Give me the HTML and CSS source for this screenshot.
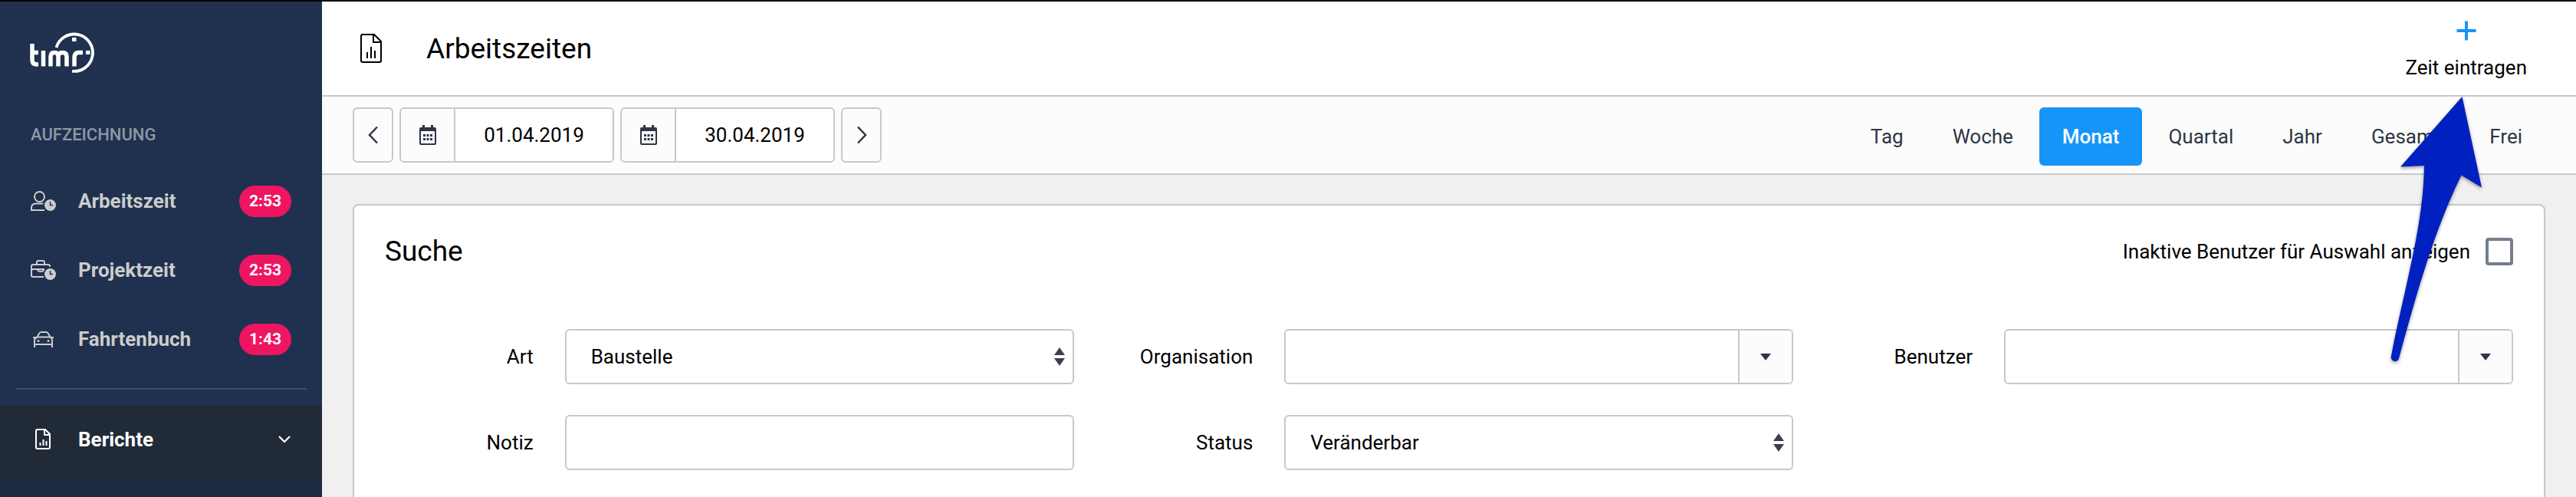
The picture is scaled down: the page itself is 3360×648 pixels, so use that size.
FILE: index.html
```html
<!DOCTYPE html>
<html lang="de">

<head>
    <meta charset="UTF-8">
    <meta name="viewport" content="width=device-width, initial-scale=1.0">
    <title>timr - Arbeitszeiten</title>
    <link rel="stylesheet" href="styles.css">
</head>

<body>
    <div class="app">
        <aside class="sidebar">
            <a class="logo" href="#" aria-label="timr">
                <svg width="86" height="54" viewBox="0 0 86 54" fill="none" stroke="#fff">
                    <path d="M35.500 20A24.200 24.200 0 1 1 56 50.800" stroke-width="3.800" />
                    <path d="M4 15v21q0 6 6 6h2M4 26.500h8M18.500 24v20.500M28 44.500V32q0-5.500 5-5.500t5 5.500v12.500M38 32q0-5.500 5.500-5.500t5.500 5.500v12.500M59 44.500V33q0-6.500 6-6.500h5" stroke-width="5.500" />
                    <path d="M56 7h5.500v5H56zM74 24h5.500v5H74z" fill="#fff" stroke="none" />
                </svg>
            </a>
            <h2 class="nav-title">Aufzeichnung</h2>
            <nav class="nav">
                <a class="nav-item" href="#">
                    <svg class="nav-icon" viewBox="0 0 34 28" fill="none" stroke="currentColor" stroke-width="2">
                        <circle cx="11.500" cy="8.500" r="6.500" />
                        <path d="M18 26H1v-3q0-5.500 5.500-5.500h10" />
                        <circle cx="25.500" cy="19.500" r="7.500" fill="currentColor" stroke="none" />
                        <path d="M25.500 15v4.500h3.500" stroke="#1f314f" stroke-width="1.500" />
                    </svg>
                    <span class="nav-label">Arbeitszeit</span>
                    <span class="badge">2:53</span>
                </a>
                <a class="nav-item" href="#">
                    <svg class="nav-icon" viewBox="0 0 34 28" fill="none" stroke="currentColor" stroke-width="2">
                        <path d="M17 23H3q-2 0-2-2V9q0-2 2-2h20q2 0 2 2v1M8 7V4q0-2 2-2h6q2 0 2 2v3M1 13h17M9 13q0 3 4 3t4-3" />
                        <circle cx="25.500" cy="19.500" r="7.500" fill="currentColor" stroke="none" />
                        <path d="M25.500 15v4.500h3.500" stroke="#1f314f" stroke-width="1.500" />
                    </svg>
                    <span class="nav-label">Projektzeit</span>
                    <span class="badge">2:53</span>
                </a>
                <a class="nav-item" href="#">
                    <svg class="nav-icon" viewBox="0 0 34 28" fill="none" stroke="currentColor" stroke-width="2">
                        <path d="M5 25v-9q0-3 3-4l3-5q1-2 3-2h6q2 0 3 2l3 5q2 1 2 4v9M5 21h23M8 11.500h17M3 12h4M26 12h4" />
                        <circle cx="10" cy="16.500" r="1.500" fill="currentColor" stroke="none" />
                        <circle cx="23" cy="16.500" r="1.500" fill="currentColor" stroke="none" />
                    </svg>
                    <span class="nav-label">Fahrtenbuch</span>
                    <span class="badge">1:43</span>
                </a>
            </nav>
            <hr class="nav-divider">
            <a class="nav-item nav-item-active" href="#">
                <svg class="nav-icon" viewBox="0 0 34 28" fill="none" stroke="currentColor" stroke-width="2">
                    <path d="M9 1h10l6 6v17q0 2-2 2H9q-2 0-2-2V3q0-2 2-2zM18 1v7h7M12.500 22v-4M16.500 22v-8M20.500 22v-6" />
                </svg>
                <span class="nav-label">Berichte</span>
                <svg class="nav-chevron" width="16" height="10" viewBox="0 0 16 10" fill="none" stroke="#fff" stroke-width="2.200">
                    <path d="M1 1l7 7 7-7" />
                </svg>
            </a>
            <div class="nav-sub"></div>
        </aside>

        <main class="main">
            <header class="header">
                <svg class="header-icon" width="30" height="40" viewBox="0 0 30 40" fill="none" stroke="#000" stroke-width="2">
                    <path d="M4 2h15l9 9v25q0 2-2 2H4q-2 0-2-2V4q0-2 2-2zM18 2v10h10M10 33v-8M15 33V18M20 33V23" />
                </svg>
                <h1 class="header-title">Arbeitszeiten</h1>
                <a class="header-action" href="#">
                    <svg width="26" height="26" viewBox="0 0 26 26" stroke="#1595f9" stroke-width="4">
                        <path d="M13 .5v25M.5 13h25" />
                    </svg>
                    <span>Zeit eintragen</span>
                </a>
            </header>

            <div class="toolbar">
                <button class="step" aria-label="Zurück">
                    <svg width="14" height="24" viewBox="0 0 14 24" fill="none" stroke="#2d3644" stroke-width="2.500">
                        <path d="M12 1.500L2 12l10 10.500" />
                    </svg>
                </button>
                <div class="date">
                    <span class="date-icon">
                        <svg width="24" height="28" viewBox="0 0 24 28" fill="#2d3644">
                            <path fill-rule="evenodd" d="M5 1h3v3h8V1h3v3h2q2 0 2 2v19q0 2-2 2H3q-2 0-2-2V6q0-2 2-2h2zM3 9v16h18V9z" />
                            <path d="M6 13h3v3H6zM10.500 13h3v3h-3zM15 13h3v3h-3zM6 18h3v3H6zM10.500 18h3v3h-3zM15 18h3v3h-3z" />
                        </svg>
                    </span>
                    <span class="date-value">01.04.2019</span>
                </div>
                <div class="date">
                    <span class="date-icon">
                        <svg width="24" height="28" viewBox="0 0 24 28" fill="#2d3644">
                            <path fill-rule="evenodd" d="M5 1h3v3h8V1h3v3h2q2 0 2 2v19q0 2-2 2H3q-2 0-2-2V6q0-2 2-2h2zM3 9v16h18V9z" />
                            <path d="M6 13h3v3H6zM10.500 13h3v3h-3zM15 13h3v3h-3zM6 18h3v3H6zM10.500 18h3v3h-3zM15 18h3v3h-3z" />
                        </svg>
                    </span>
                    <span class="date-value">30.04.2019</span>
                </div>
                <button class="step" aria-label="Weiter">
                    <svg width="14" height="24" viewBox="0 0 14 24" fill="none" stroke="#2d3644" stroke-width="2.500">
                        <path d="M2 1.500L12 12 2 22.500" />
                    </svg>
                </button>
                <div class="tabs">
                    <a class="tab" href="#">Tag</a>
                    <a class="tab" href="#">Woche</a>
                    <a class="tab tab-active" href="#">Monat</a>
                    <a class="tab" href="#">Quartal</a>
                    <a class="tab" href="#">Jahr</a>
                    <a class="tab" href="#">Gesamt</a>
                    <a class="tab" href="#">Frei</a>
                </div>
            </div>

            <section class="card">
                <div class="card-header">
                    <h2 class="card-title">Suche</h2>
                    <label class="inactive">
                        Inaktive Benutzer für Auswahl anzeigen
                        <span class="checkbox"></span>
                    </label>
                </div>
                <div class="form">
                    <div class="field">
                        <span class="label">Art</span>
                        <div class="control">
                            <span class="value">Baustelle</span>
                            <svg class="updown" width="14" height="24" viewBox="0 0 14 24" fill="#3b414b">
                                <path d="M7 0l7 10H0zM7 24l7-10H0z" />
                            </svg>
                        </div>
                    </div>
                    <div class="field">
                        <span class="label">Organisation</span>
                        <div class="control">
                            <span class="value"></span>
                            <span class="caret"></span>
                        </div>
                    </div>
                    <div class="field">
                        <span class="label">Benutzer</span>
                        <div class="control">
                            <span class="value"></span>
                            <span class="caret"></span>
                        </div>
                    </div>
                    <div class="field">
                        <span class="label">Notiz</span>
                        <div class="control"></div>
                    </div>
                    <div class="field">
                        <span class="label">Status</span>
                        <div class="control">
                            <span class="value">Veränderbar</span>
                            <svg class="updown" width="14" height="24" viewBox="0 0 14 24" fill="#3b414b">
                                <path d="M7 0l7 10H0zM7 24l7-10H0z" />
                            </svg>
                        </div>
                    </div>
                </div>
            </section>
        </main>
    </div>

    <!-- Hint arrow pointing at "Zeit eintragen" -->
    <svg class="hint-arrow" width="120" height="356" viewBox="0 0 120 356" fill="#0021c0">
        <path d="M86.500 1L112 119.500 85.500 103.500C50 175 26 262 4 342.500a5 5 0 0 1 -10 -3.500C10 255 36 170 37 91L6 92.500z" />
    </svg>
</body>

</html>
```
FILE: styles.css
```css
* {
    margin: 0;
    padding: 0;
    box-sizing: border-box;
}

body {
    font-family: Roboto, sans-serif;
    font-size: 26px;
    color: #000;
    background: #f0f0f0;
    height: 648px;
    overflow: hidden;
}

a {
    color: inherit;
    text-decoration: none;
}

svg {
    display: block;
    flex: none;
}

.app {
    display: flex;
    height: 648px;
    border-top: 2px solid #000;
}

/* Sidebar */
.sidebar {
    width: 420px;
    flex: none;
    display: flex;
    flex-direction: column;
    background: #1f314f;
    color: #ccc;
}

.logo {
    height: 138px;
    padding: 40px 0 0 38px;
}

.nav-title {
    height: 77px;
    padding-left: 40px;
    font-size: 22px;
    line-height: 72px;
    font-weight: 500;
    text-transform: uppercase;
    color: #8f98a5;
}

.nav-item {
    height: 90px;
    display: flex;
    align-items: center;
    padding: 0 40px;
    font-weight: 700;
}

.nav-icon {
    width: 34px;
    height: 28px;
    margin-right: 28px;
}

.nav-label {
    flex: 1;
}

.badge {
    width: 68px;
    height: 41px;
    border-radius: 21px;
    background: #ee1561;
    color: #fff;
    font-size: 21px;
    line-height: 41px;
    text-align: center;
}

.nav-divider {
    height: 2px;
    margin: 19px 20px 20px;
    border: none;
    background: #3f4d63;
}

.nav-item-active {
    background: #212b38;
    color: #fff;
}

.nav-chevron {
    margin-right: 1px;
}

.nav-sub {
    flex: 1;
    background: linear-gradient(#212c3b, #1c2a42);
}

/* Header */
.main {
    flex: 1;
    display: flex;
    flex-direction: column;
}

.header {
    height: 124px;
    display: flex;
    align-items: center;
    padding: 0 64px 0 49px;
    background: #fff;
    border-bottom: 2px solid #c8c8c8;
}

.header-title {
    flex: 1;
    margin-left: 57px;
    font-size: 37px;
    font-weight: 400;
}

.header-action {
    display: flex;
    flex-direction: column;
    align-items: center;
    gap: 20px;
    padding-top: 4px;
}

/* Toolbar */
.toolbar {
    height: 102px;
    display: flex;
    gap: 8px;
    padding: 14px 40px 0;
    background: #fcfcfc;
    border-bottom: 2px solid #c8c8c8;
}

.step,
.date {
    height: 72px;
    display: flex;
    align-items: center;
    justify-content: center;
    border: 2px solid #c8c8c8;
    border-radius: 6px;
    background: #fcfcfc;
}

.step {
    width: 53px;
}

.date {
    width: 280px;
    overflow: hidden;
}

.date-icon {
    width: 71px;
    height: 100%;
    display: flex;
    align-items: center;
    justify-content: center;
    border-right: 2px solid #c8c8c8;
}

.date-value {
    flex: 1;
    background: #fff;
    line-height: 68px;
    text-align: center;
}

.tabs {
    display: flex;
    gap: 4px;
    margin-left: auto;
}

.tab {
    height: 76px;
    padding: 0 30px;
    line-height: 76px;
    color: #2d3644;
}

.tab-active {
    border-radius: 6px;
    background: #1595f9;
    color: #fff;
    font-weight: 500;
}

/* Search card */
.card {
    flex: 1;
    margin: 38px 40px 0;
    padding: 0 40px;
    background: #fff;
    border: 2px solid #c8c8c8;
    border-bottom: none;
    border-radius: 8px 8px 0 0;
}

.card-header {
    height: 161px;
    display: flex;
    justify-content: space-between;
    padding-top: 42px;
}

.card-title {
    font-size: 37px;
    line-height: 36px;
    font-weight: 400;
}

.inactive {
    height: 36px;
    display: flex;
    align-items: center;
    gap: 20px;
}

.checkbox {
    width: 36px;
    height: 36px;
    border: 4px solid #757f8c;
    border-radius: 4px;
}

.form {
    display: grid;
    grid-template-columns: repeat(3, 1fr);
    gap: 40px;
}

.field {
    display: flex;
    align-items: center;
}

.label {
    flex: 1;
    padding-right: 41px;
    text-align: right;
}

.control {
    width: 664px;
    height: 72px;
    display: flex;
    align-items: center;
    border: 2px solid #c8c8c8;
    border-radius: 6px;
}

.value {
    flex: 1;
    padding-left: 32px;
}

.updown {
    margin-right: 10px;
}

.caret {
    width: 70px;
    height: 100%;
    display: flex;
    align-items: center;
    justify-content: center;
    border-left: 2px solid #c8c8c8;
    border-radius: 0 4px 4px 0;
    background: #fcfcfc;
}

.caret::before {
    content: "";
    border: 7px solid transparent;
    border-top: 9px solid #2d3644;
    border-bottom: 0;
}

/* Drawn over the page */
.hint-arrow {
    position: absolute;
    left: 3125px;
    top: 125px;
    overflow: visible;
    filter: drop-shadow(0 2px 2px rgba(0, 0, 0, 0.4));
}
```
